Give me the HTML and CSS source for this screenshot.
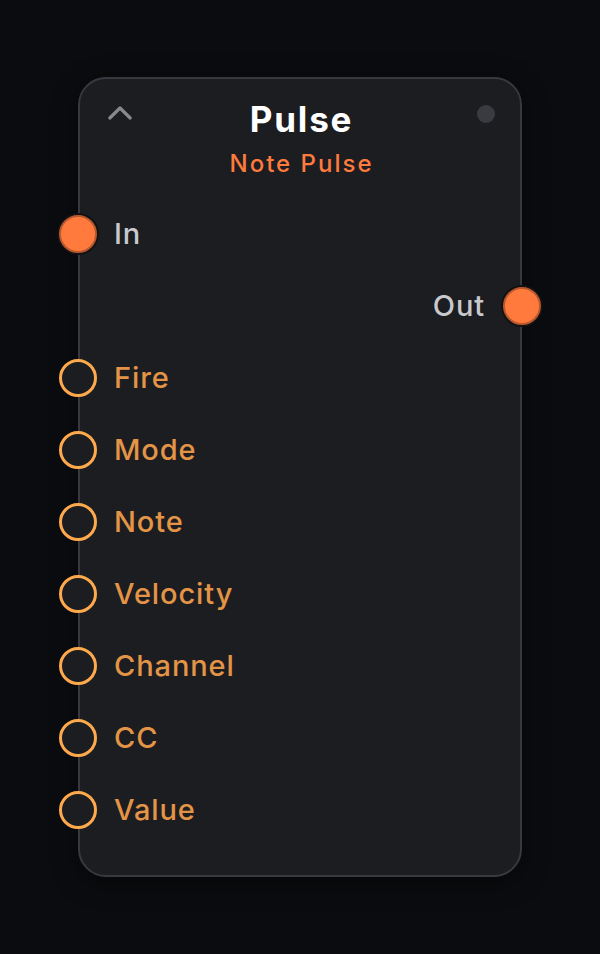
FILE: index.html
```html
<!DOCTYPE html>
<html>
<head>
<meta charset="utf-8">
<link rel="stylesheet" href="styles.css">
</head>
<body>
<div class="page">
  <div class="node">
    <div class="header">
      <svg class="chevron" width="26" height="16" viewBox="0 0 26 16"><path d="M2.8 13 L13 3 L23.2 13" fill="none" stroke="#88888c" stroke-width="3.2" stroke-linecap="round" stroke-linejoin="round"/></svg>
      <div class="titles">
        <div class="title">Pulse</div>
        <div class="subtitle">Note Pulse</div>
      </div>
      <span class="status"></span>
    </div>
    <div class="ports">
      <div class="row in"><span class="port filled"></span><span class="label grey">In</span></div>
      <div class="row out"><span class="label grey">Out</span><span class="port filled"></span></div>
      <div class="row in"><span class="port hollow"></span><span class="label orange">Fire</span></div>
      <div class="row in"><span class="port hollow"></span><span class="label orange">Mode</span></div>
      <div class="row in"><span class="port hollow"></span><span class="label orange">Note</span></div>
      <div class="row in"><span class="port hollow"></span><span class="label orange">Velocity</span></div>
      <div class="row in"><span class="port hollow"></span><span class="label orange">Channel</span></div>
      <div class="row in"><span class="port hollow"></span><span class="label orange">CC</span></div>
      <div class="row in"><span class="port hollow"></span><span class="label orange">Value</span></div>
    </div>
  </div>
</div>
</body>
</html>
```
FILE: styles.css
```css
html, body {
  margin: 0;
  padding: 0;
  background: #0b0c0f;
}
body {
  font-family: Inter, "Noto Sans", sans-serif;
  width: 600px;
  height: 954px;
  overflow: hidden;
}
.page {
  padding: 77px 0 0 78px;
}
.node {
  box-sizing: border-box;
  width: 444px;
  height: 800px;
  background: #1c1d21;
  border: 2px solid #38393e;
  border-radius: 28px;
  box-shadow: 0 6px 24px rgba(0,0,0,0.5);
  display: flex;
  flex-direction: column;
}
.header {
  display: grid;
  grid-template-columns: 1fr auto 1fr;
  padding: 18px 25px 0 28px;
}
.chevron {
  justify-self: start;
  margin-top: 8px;
  margin-left: -1px;
  display: block;
}
.status {
  justify-self: end;
  width: 18px;
  height: 18px;
  border-radius: 50%;
  background: #3a3b40;
  margin-top: 8px;
}
.titles {
  display: flex;
  flex-direction: column;
  align-items: center;
}
.title {
  font-size: 35px;
  font-weight: 700;
  line-height: 44px;
  letter-spacing: 1.8px;
  color: #ffffff;
}
.subtitle {
  margin-top: 8px;
  font-size: 24px;
  font-weight: 500;
  line-height: 30px;
  letter-spacing: 2px;
  color: #ff7a3d;
}
.ports {
  margin-top: 19px;
  display: flex;
  flex-direction: column;
}
.row {
  height: 72px;
  display: flex;
  align-items: center;
}
.row.out {
  justify-content: flex-end;
}
.row.in .port {
  margin-left: -21px;
  margin-right: 17px;
}
.row.out .port {
  margin-right: -21px;
  margin-left: 18px;
}
.port {
  box-sizing: border-box;
  border-radius: 50%;
  flex: none;
}
.port.filled {
  width: 38px;
  height: 38px;
  background: #ff7a3c;
  border: 2px solid #b9582c;
  box-shadow: 0 0 0 2px #121215;
}
.port.hollow {
  width: 38px;
  height: 38px;
  border: 3.5px solid #ffa94c;
  background: #1c1d21;
}
.label {
  font-size: 29px;
  font-weight: 500;
  line-height: 36px;
  letter-spacing: 0.9px;
}
.label.grey { color: #c9c9cd; }
.label.orange { color: #e39446; }
```
